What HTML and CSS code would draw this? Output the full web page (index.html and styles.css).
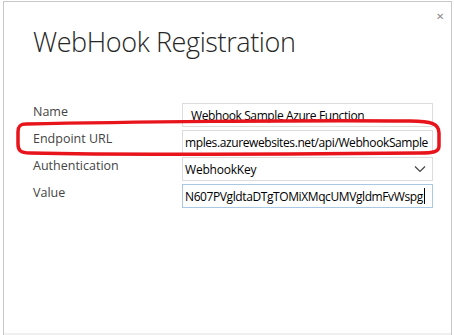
FILE: index.html
```html
<!DOCTYPE html>
<html lang="en">
<head>
    <meta charset="UTF-8">
    <title>WebHook Registration</title>
    <link rel="stylesheet" href="styles.css">
</head>
<body>
    <div class="dialog">
        <div class="topbar">
            <span class="close">&#x2715;</span>
        </div>
        <h1 class="title">WebHook Registration</h1>

        <div class="form">
            <label class="label">Name</label>
            <div class="field"><span class="name-text">Webhook Sample Azure Function</span></div>

            <label class="label">Endpoint URL</label>
            <div class="field"><span>mples.azurewebsites.net/api/WebhookSample</span></div>

            <label class="label">Authentication</label>
            <div class="field select">
                <span>WebhookKey</span>
                <svg class="chevron" width="12" height="8" viewBox="0 0 12 8">
                    <path d="M1 1.5 L6 6.5 L11 1.5" fill="none" stroke="#444" stroke-width="1.2"/>
                </svg>
            </div>

            <label class="label">Value</label>
            <div class="field focused"><span>N607PVgldtaDTgTOMiXMqcUMVgldmFvWspg</span><span class="caret"></span></div>
        </div>

        <div class="footer"></div>

        <!-- red hand drawn mark around the endpoint row -->
        <svg class="mark" width="454" height="335" viewBox="0 0 454 335">
            <path d="M26 124 C120 122 300 120 410 121 C432 121 439 124 439 133 L439 146 C439 152 433 153 420 153 C300 154 120 155 30 153 C20 153 18 150 18 144 L18 132 C18 126 20 124 26 124 Z"
                  fill="none" stroke="#e8141c" stroke-width="3.5" stroke-linejoin="round"/>
        </svg>
    </div>
</body>
</html>
```

FILE: styles.css
```css
body {
    margin: 0;
    padding: 0;
    background: #fff;
    font-family: 'Open Sans', sans-serif;
}
.dialog {
    position: relative;
    box-sizing: border-box;
    height: 334px;
    margin: 1px 2px 0 3px;
    padding: 0 18px 0 29px;
    border: 1px solid #c8c8c8;
    border-bottom: none;
    overflow: hidden;
}
.topbar {
    display: flex;
    justify-content: flex-end;
    height: 18px;
    margin-right: -11px;
    padding-top: 5px;
}
.close {
    font-size: 10px;
    color: #8a8a8a;
    line-height: 18px;
}
.title {
    margin: 0;
    font-size: 27px;
    font-weight: 300;
    letter-spacing: -0.4px;
    color: #262626;
    line-height: 34px;
}
.form {
    display: grid;
    grid-template-columns: 149px 1fr;
    grid-auto-rows: 24px;
    row-gap: 3px;
    margin-top: 44px;
}
.label {
    font-size: 12.5px;
    color: #444;
    line-height: 18px;
}
.field {
    display: flex;
    align-items: center;
    box-sizing: border-box;
    border: 1px solid #dcdcdc;
    padding: 0 6px 0 2px;
    font-size: 12px;
    letter-spacing: -0.4px;
    color: #000;
    white-space: nowrap;
    overflow: hidden;
}
.name-text {
    padding-left: 6px;
}
.select {
    justify-content: space-between;
    letter-spacing: -0.2px;
}
.focused {
    border-color: #a9c8e3;
}
.caret {
    width: 1px;
    height: 16px;
    background: #000;
    margin-left: 1px;
}
.footer {
    position: absolute;
    left: 0;
    right: 0;
    bottom: 0;
    height: 2px;
    background: #f0f0f0;
}
.mark {
    position: absolute;
    left: -4px;
    top: -2px;
    pointer-events: none;
}
```
